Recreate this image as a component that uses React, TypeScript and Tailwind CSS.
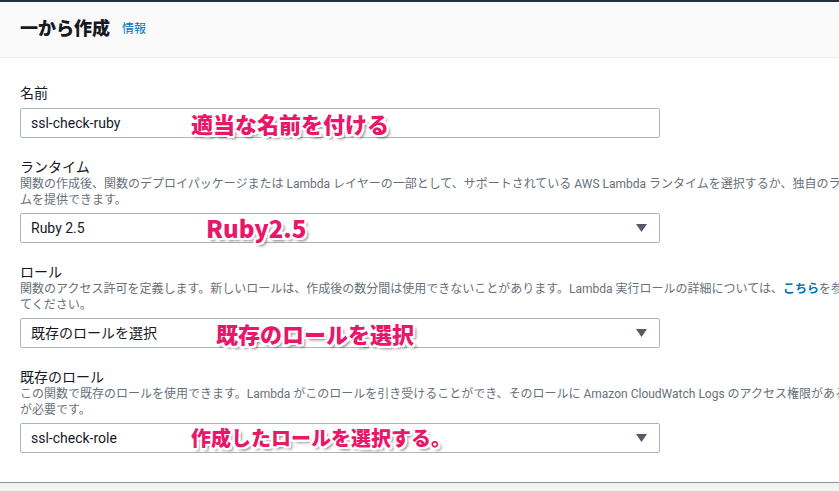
import type { ReactNode } from "react";

const font = { fontFamily: 'Roboto, "Noto Sans CJK JP", sans-serif' };

const Arrow = () => (
  <svg width="11" height="8" viewBox="0 0 11 8" className="absolute right-[12px] top-[10px]">
    <polygon points="0,0 11,0 5.5,8" fill="#545b64" />
  </svg>
);

const Note = ({ children, className }: { children: ReactNode; className: string }) => (
  <span
    className={`absolute font-black text-[#e8176a] whitespace-nowrap leading-none ${className}`}
    style={{
      fontFamily: '"Noto Sans CJK JP", sans-serif',
      textShadow:
        "-2px -2px 0 #fff, 2px -2px 0 #fff, -2px 2px 0 #fff, 2px 2px 0 #fff, 0 -2px 0 #fff, 0 2px 0 #fff, -2px 0 0 #fff, 2px 0 0 #fff, 3px 3px 3px rgba(0,0,0,0.5)",
    }}
  >
    {children}
  </span>
);

const Field = ({
  label,
  desc,
  value,
  select,
  note,
  first,
}: {
  label: string;
  desc?: ReactNode[];
  value: string;
  select?: boolean;
  note: ReactNode;
  first?: boolean;
}) => (
  <div className={first ? "" : "mt-[20px]"}>
    <div className="text-[14px] leading-[18px] text-[#16191f]">{label}</div>
    {desc && (
      <div className="text-[12px] leading-[16px] text-[#687078]">
        {desc.map((d, i) => (
          <div key={i} className="whitespace-nowrap">
            {d}
          </div>
        ))}
      </div>
    )}
    <div className={`relative w-[640px] h-[30px] border border-[#aab7b8] rounded-[2px] bg-white ${first ? "mt-[6px]" : "mt-[5px]"}`}>
      <span className="absolute left-[10px] top-[5px] text-[14px] leading-[18px] text-[#16191f]">{value}</span>
      {select && <Arrow />}
      {note}
    </div>
  </div>
);

export default function App() {
  return (
    <div className="w-[839px] h-[491px] overflow-hidden bg-white" style={font}>
      <div className="h-[2px] bg-[#232f3e]" />
      <div className="h-[56px] bg-[#fafafa] border-b border-[#eaeded] flex items-center px-5 gap-3">
        <span className="text-[18px] font-black text-[#16191f] -mt-[3px]">一から作成</span>
        <span className="text-[12px] text-[#0073bb] -mt-[2px]">情報</span>
      </div>
      <div className="px-5 pt-[26px] pb-[29px] w-[1000px]">
        <Field
          first
          label="名前"
          value="ssl-check-ruby"
          note={<Note className="left-[170px] top-[3px] text-[22px]">適当な名前を付ける</Note>}
        />
        <Field
          label="ランタイム"
          desc={[
            "関数の作成後、関数のデプロイパッケージまたは Lambda レイヤーの一部として、サポートされている AWS Lambda ランタイムを選択するか、独自のランタイ",
            "ムを提供できます。",
          ]}
          value="Ruby 2.5"
          select
          note={<Note className="left-[185px] top-[2px] text-[24px]">Ruby2.5</Note>}
        />
        <Field
          label="ロール"
          desc={[
            <>
              関数のアクセス許可を定義します。新しいロールは、作成後の数分間は使用できないことがあります。Lambda 実行ロールの詳細については、
              <span className="font-bold text-[#0073bb]">こちら</span>を参照し
            </>,
            "てください。",
          ]}
          value="既存のロールを選択"
          select
          note={<Note className="left-[195px] top-[3px] text-[22px]">既存のロールを選択</Note>}
        />
        <Field
          label="既存のロール"
          desc={[
            "この関数で既存のロールを使用できます。Lambda がこのロールを引き受けることができ、そのロールに Amazon CloudWatch Logs のアクセス権限があること",
            "が必要です。",
          ]}
          value="ssl-check-role"
          select
          note={<Note className="left-[170px] top-[4px] text-[20px]">作成したロールを選択する。</Note>}
        />
      </div>
      <div className="h-px bg-[#879596]" />
      <div className="h-[20px] bg-[#f2f3f3]" />
    </div>
  );
}
